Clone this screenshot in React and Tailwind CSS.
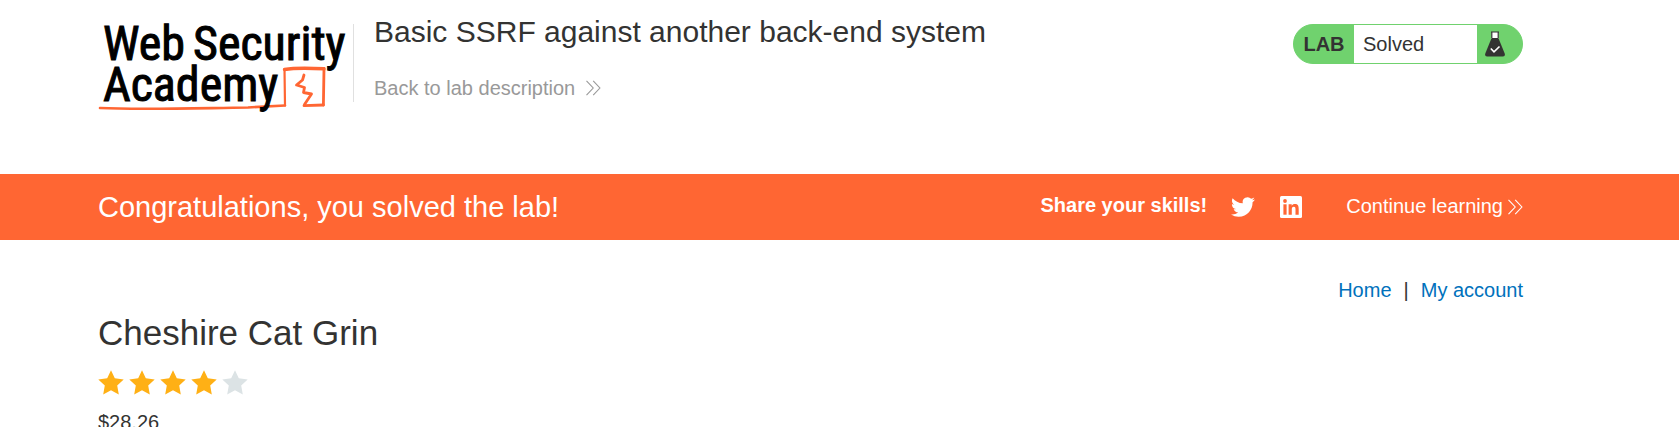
function Logo() {
  return (
    <svg className="block h-[92px] w-[255px] overflow-visible" viewBox="0 0 255 92" role="img" aria-label="Web Security Academy">
      <g fill="none" stroke="#ff6633" strokeLinejoin="round" strokeLinecap="round">
        <path d="M2 88 C40 90 90 88.400 150 87.500 L187 85.500" strokeWidth="2.600" />
        <path d="M187 85.500 L186.500 49" strokeWidth="2.200" />
        <path d="M186.500 49.500 C198 47.500 212 48 226 48.800" strokeWidth="3.400" />
        <path d="M226 48.500 L225.400 85" strokeWidth="2.800" />
        <path d="M225.400 85 L206 85.600" strokeWidth="2.800" />
        <path d="M206 55 L204.500 60 L198.500 65 L206.500 67.500 L205.500 72.500 L213.500 74 L206.500 84.500" strokeWidth="2.800" />
      </g>
      <g
        className="fill-black font-['Roboto_Condensed','Roboto',sans-serif] text-[48px]"
        stroke="#000"
        strokeWidth="1"
      >
        <text x="5" y="40">Web</text>
        <text x="95" y="40">Security</text>
        <text x="5" y="81">Academy</text>
      </g>
    </svg>
  );
}

function Chevrons({ className }) {
  return (
    <svg className={className} viewBox="0 0 16 16" fill="none" stroke="currentColor" strokeWidth="1.100" aria-hidden="true">
      <path d="M1.500 .8 L8.200 8 L1.500 15.200 M8.200 .8 L14.900 8 L8.200 15.200" />
    </svg>
  );
}

function Flask() {
  return (
    <svg className="h-[26px] w-5" viewBox="0 0 20 26" aria-hidden="true">
      <path d="M6.500 1 H13.500 V8 H6.500Z" fill="#fff" />
      <path d="M6 1 H14 M6.800 1 V7 M13.200 1 V7" stroke="#333332" strokeWidth="1.200" fill="none" />
      <path d="M6.600 7 H13.400 L19.700 22.500 Q20.500 25.400 18 25.400 H2 Q-.5 25.400 .3 22.500Z" fill="#333332" />
      <path d="M5.800 17.500 L9 20.800 L14.500 15.500" stroke="#fff" strokeWidth="1.600" fill="none" />
    </svg>
  );
}

function Twitter() {
  return (
    <svg className="size-6" viewBox="0 0 24 24" fill="currentColor" aria-hidden="true">
      <path d="M23.953 4.570a10 10 0 01-2.825.775 4.958 4.958 0 002.163-2.723c-.951.555-2.005.959-3.127 1.184a4.920 4.920 0 00-8.384 4.482C7.690 8.095 4.067 6.130 1.640 3.162a4.822 4.822 0 00-.666 2.475c0 1.710.870 3.213 2.188 4.096a4.904 4.904 0 01-2.228-.616v.060a4.923 4.923 0 003.946 4.827 4.996 4.996 0 01-2.212.085 4.936 4.936 0 004.604 3.417 9.867 9.867 0 01-6.102 2.105c-.390 0-.779-.023-1.170-.067a13.995 13.995 0 007.557 2.209c9.053 0 13.998-7.496 13.998-13.985 0-.210 0-.420-.015-.630A9.935 9.935 0 0024 4.590z" />
    </svg>
  );
}

function LinkedIn() {
  return (
    <svg className="size-[22px]" viewBox="0 0 22 22" aria-hidden="true">
      <rect width="22" height="22" rx="1.500" fill="#fff" />
      <g fill="#ff6633">
        <circle cx="5" cy="5" r="1.900" />
        <path d="M3.400 8.300 H6.600 V18.700 H3.400Z" />
        <path d="M8.600 8.300 H11.700 V9.700 C12.300 8.700 13.400 8 14.900 8 C18 8 18.700 10 18.700 12.900 V18.700 H15.500 V13.600 C15.500 12.100 15.400 10.800 13.800 10.800 C12.200 10.800 11.800 12 11.800 13.500 V18.700 H8.600Z" />
      </g>
    </svg>
  );
}

function Star({ filled }) {
  return (
    <svg className={filled ? "h-[25px] w-[26px] text-[#ffb015]" : "h-[25px] w-[26px] text-[#dce3e5]"} viewBox="0 0 26 25" fill="currentColor" aria-hidden="true">
      <path d="M13 .3 L16.800 8.300 L25.700 9.500 L19.200 15.600 L20.800 24.600 L13 20.300 L5.200 24.600 L6.800 15.600 L.3 9.500 L9.200 8.300Z" />
    </svg>
  );
}

export default function App() {
  return (
    <div className="flex h-screen flex-col overflow-x-hidden overflow-y-auto bg-white font-['Liberation_Sans',Arial,sans-serif] text-xl text-[#333332] [scrollbar-width:none]">
      <header className="flex shrink-0 items-start pt-5 pr-[156px] pb-[62px] pl-[98px]">
        <a href="#academy" className="shrink-0">
          <Logo />
        </a>
        <div className="mt-1 flex min-h-[78px] grow flex-col items-start border-l border-[#e0e0e0] pl-5">
          <h1 className="-mt-2.5 text-[30px] leading-9">Basic SSRF against another back-end system</h1>
          <a href="#description" className="mt-[26px] flex items-center gap-2.5 leading-6 text-[#999]">
            Back to lab description
            <Chevrons className="size-4" />
          </a>
        </div>
        <div className="mt-1 flex h-10 w-[230px] shrink-0 items-stretch overflow-hidden rounded-[20px] border border-[#70d26e] bg-[#70d26e]">
          <span className="flex w-[60px] items-center justify-center font-bold">LAB</span>
          <span className="flex grow items-center bg-white pl-[9px]">Solved</span>
          <span className="flex w-[45px] items-center pl-2">
            <Flask />
          </span>
        </div>
      </header>

      <section className="flex shrink-0 items-center justify-between bg-[#ff6633] py-[17px] pr-[156px] pl-[98px] text-white">
        <h2 className="text-[29px] leading-8">Congratulations, you solved the lab!</h2>
        <div className="flex items-center leading-6">
          <span className="pb-1 font-bold">Share your skills!</span>
          <a href="#twitter" aria-label="Share on Twitter" className="ml-6">
            <Twitter />
          </a>
          <a href="#linkedin" aria-label="Share on LinkedIn" className="ml-[25px]">
            <LinkedIn />
          </a>
          <a href="#continue" className="ml-11 flex items-center gap-1">
            <span className="pb-0.5">Continue learning</span>
            <Chevrons className="size-4" />
          </a>
        </div>
      </section>

      <main className="shrink-0 pt-9 pr-[156px] pl-[98px]">
        <nav className="flex justify-end gap-3 leading-7 text-[#0071bc]">
          <a href="#home">Home</a>
          <span className="text-[#333332]">|</span>
          <a href="#account">My account</a>
        </nav>
        <h3 className="mt-[7px] text-[35px] leading-[44px]">Cheshire Cat Grin</h3>
        <div className="mt-[15px] flex gap-[5px]" role="img" aria-label="4 out of 5 stars">
          <Star filled />
          <Star filled />
          <Star filled />
          <Star filled />
          <Star />
        </div>
        <p className="mt-[15px] leading-6">$28.26</p>
      </main>
    </div>
  );
}
